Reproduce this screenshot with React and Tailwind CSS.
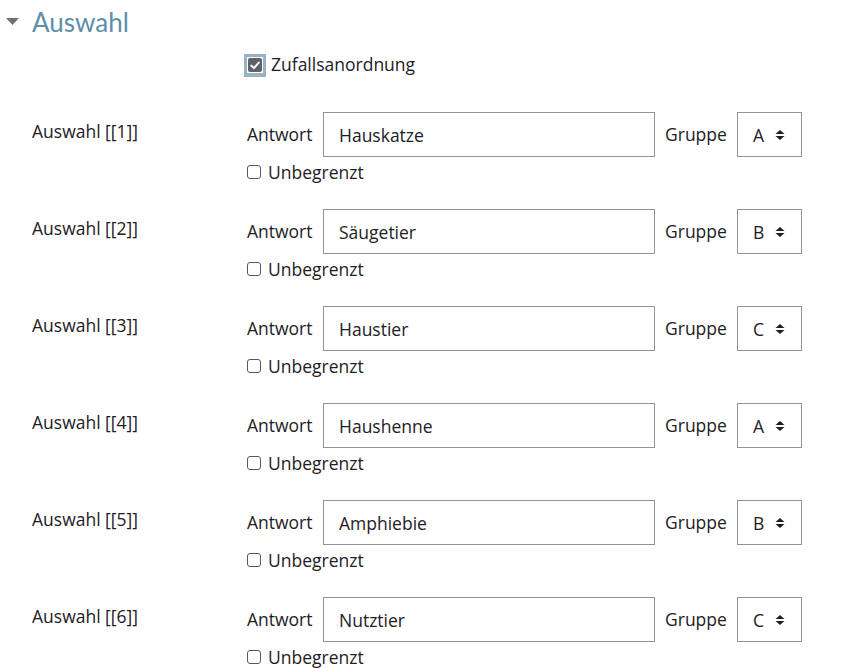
import React from "react";

const rows = [
  ["1", "Hauskatze", "A"],
  ["2", "Säugetier", "B"],
  ["3", "Haustier", "C"],
  ["4", "Haushenne", "A"],
  ["5", "Amphiebie", "B"],
  ["6", "Nutztier", "C"],
];

function Arrows() {
  return (
    <svg width="10" height="12" viewBox="0 0 10 12" className="shrink-0">
      <path d="M5 1 L9.5 5 L0.5 5 Z" fill="#1d2125" />
      <path d="M5 11 L9.5 7 L0.5 7 Z" fill="#1d2125" />
    </svg>
  );
}

export default function App() {
  return (
    <div
      className="w-[847px] h-[668px] overflow-hidden bg-white text-[#1d2125] text-[17.5px] leading-[24px]"
      style={{ fontFamily: "'Open Sans', 'Liberation Sans', sans-serif" }}
    >
      <div className="flex items-center h-[44px] pl-[6px]">
        <svg width="13" height="8" viewBox="0 0 13 8" className="mr-[13px]">
          <path d="M0 0 L13 0 L6.5 7 Z" fill="#6f7378" />
        </svg>
        <span className="text-[26px] text-[#5d8fab] leading-none" style={{ fontFamily: "Lato, sans-serif" }}>Auswahl</span>
      </div>
      <div className="flex items-center pl-[244px] h-[42px]">
        <div className="w-[22px] h-[23px] bg-[#9ab3c4] flex items-center justify-center">
          <div className="w-[16px] h-[16px] bg-white flex items-center justify-center">
            <div className="w-[14px] h-[14px] rounded-[2px] bg-[#5f6368] flex items-center justify-center">
              <svg width="10" height="9" viewBox="0 0 10 9">
                <path d="M1.3 4.6 L3.9 7.1 L8.8 1.6" stroke="white" strokeWidth="2" fill="none" strokeLinecap="round" strokeLinejoin="round" />
              </svg>
            </div>
          </div>
        </div>
        <span className="ml-[5px] -mt-[2px]">Zufallsanordnung</span>
      </div>
      <div className="flex flex-col gap-[7px] pt-[26px]">
        {rows.map(([n, val, grp]) => (
          <div key={n} className="flex h-[90px]">
            <div className="w-[247px] pl-[32px] pt-[7px]">Auswahl [[{n}]]</div>
            <div className="flex flex-col">
              <div className="flex items-center h-[45px]">
                <span className="w-[76px] -mt-[2px]">Antwort</span>
                <div className="w-[332px] h-[45px] border border-[#8f959e] flex items-center pl-[15px]">
                  {val}
                </div>
                <span className="ml-[10px] w-[72px] -mt-[2px]">Gruppe</span>
                <div className="w-[65px] h-[45px] border border-[#8f959e] flex items-center pl-[15px] gap-[10px]">
                  <span className="w-[12px]">{grp}</span>
                  <Arrows />
                </div>
              </div>
              <div className="flex items-center h-[30px]">
                <div className="w-[14px] h-[14px] border border-[#55595e] rounded-[3px] mr-[7px]" />
                <span className="-mt-[1px]">Unbegrenzt</span>
              </div>
            </div>
          </div>
        ))}
      </div>
    </div>
  );
}
